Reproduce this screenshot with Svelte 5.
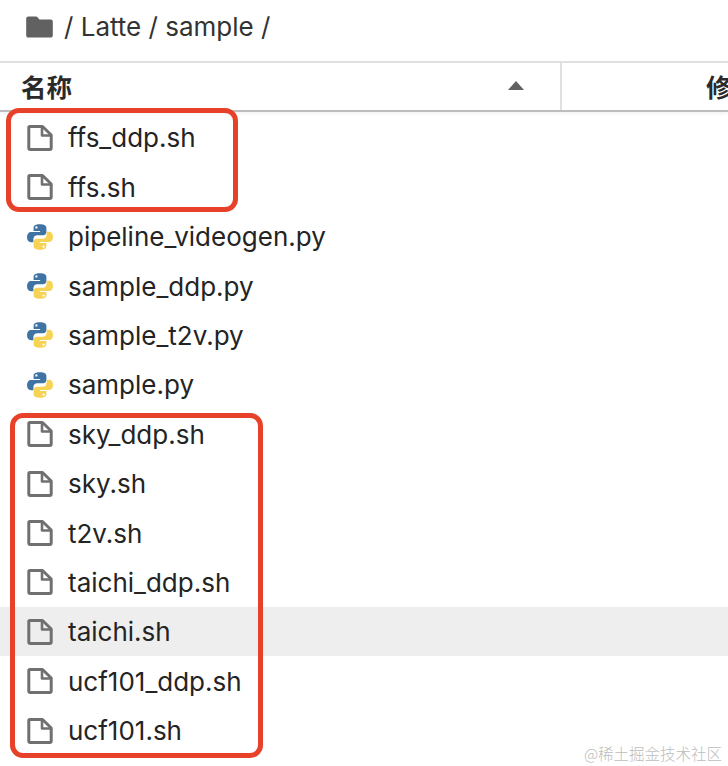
<script>
  const files = [
    { name: 'ffs_ddp.sh', type: 'file' },
    { name: 'ffs.sh', type: 'file' },
    { name: 'pipeline_videogen.py', type: 'py' },
    { name: 'sample_ddp.py', type: 'py' },
    { name: 'sample_t2v.py', type: 'py' },
    { name: 'sample.py', type: 'py' },
    { name: 'sky_ddp.sh', type: 'file' },
    { name: 'sky.sh', type: 'file' },
    { name: 't2v.sh', type: 'file' },
    { name: 'taichi_ddp.sh', type: 'file' },
    { name: 'taichi.sh', type: 'file', active: true },
    { name: 'ucf101_ddp.sh', type: 'file' },
    { name: 'ucf101.sh', type: 'file' }
  ];
</script>

<div class="page">
  <div class="crumbs">
    <svg class="folder" viewBox="0 0 27 22" width="27" height="22" aria-hidden="true">
      <path d="M2.5 0.5H9.5C10.6 0.5 11.3 1 12 1.8L13.4 3.5H24.5C25.9 3.5 26.8 4.4 26.8 5.8V19.2C26.8 20.6 25.9 21.5 24.5 21.5H2.5C1.1 21.5 0.2 20.6 0.2 19.2V2.8C0.2 1.4 1.1 0.5 2.5 0.5Z" fill="#616161"/>
    </svg>
    <span>/ Latte / sample /</span>
  </div>

  <div class="header">
    <div class="col name">
      <span>名称</span>
      <svg class="sort" viewBox="0 0 16 9" width="16" height="9" aria-hidden="true"><path d="M8 0L16 9H0Z" fill="#616161"/></svg>
    </div>
    <div class="col modified"><span>修</span></div>
  </div>

  <ul class="list">
    {#each files as f}
      <li class="row" class:active={f.active}>
        {#if f.type === 'file'}
          <svg class="icon" viewBox="0 0 26 26" width="26" height="26" aria-hidden="true">
            <path d="M2.8 1.5H15.5L24.2 10V23C24.2 24 23.7 24.5 22.7 24.5H3.3C2.3 24.5 1.8 24 1.8 23V2.5C1.8 1.9 2.2 1.5 2.8 1.5Z" fill="none" stroke="#707070" stroke-width="3" stroke-linejoin="round"/>
            <path d="M15 1.5V10.5H24" fill="none" stroke="#707070" stroke-width="2.6" stroke-linejoin="round"/>
          </svg>
        {:else}
          <svg class="icon" viewBox="0 0 26 26" width="26" height="26" aria-hidden="true">
            <path d="M12.8 0.2C6.8 0.2 6.6 2.6 6.6 4.2V6.9H13.1V8H4C1.6 8 0 10 0 13.1C0 16.3 1.5 18.3 3.8 18.3H6.4V15C6.4 12.8 8.2 11.2 10.2 11.2H16.2C18 11.2 19.4 9.8 19.4 8V3.8C19.4 1.8 17.4 0.2 12.8 0.2ZM9.4 2.2A1.2 1.2 0 1 1 9.4 4.6A1.2 1.2 0 0 1 9.4 2.2Z" fill="#3f73a3"/>
            <path d="M13.2 25.8C19.2 25.8 19.4 23.4 19.4 21.8V19.1H12.9V18H22C24.4 18 26 16 26 12.9C26 9.7 24.5 7.7 22.2 7.7H19.6V11C19.6 13.2 17.8 14.8 15.8 14.8H9.8C8 14.8 6.6 16.2 6.6 18V22.2C6.6 24.2 8.6 25.8 13.2 25.8ZM16.6 23.8A1.2 1.2 0 1 1 16.6 21.4A1.2 1.2 0 0 1 16.6 23.8Z" fill="#f7d355"/>
          </svg>
        {/if}
        <span class="label">{f.name}</span>
      </li>
    {/each}
  </ul>

  <div class="mark one"></div>
  <div class="mark two"></div>
  <div class="watermark">@稀土掘金技术社区</div>
</div>

<style>
  :global(body) {
    margin: 0;
    background: #fff;
  }
  .page {
    position: relative;
    width: 728px;
    height: 766px;
    overflow: hidden;
    background: #fff;
    color: #212121;
    font-family: Inter, "Noto Sans CJK SC", sans-serif;
  }
  .crumbs {
    box-sizing: border-box;
    display: flex;
    align-items: center;
    gap: 11px;
    padding: 0 0 8px 26px;
    font-size: 26px;
    color: #333;
    border-bottom: 2px solid #e0e0e0;
    height: 63px;
  }
  .folder {
    flex: none;
  }
  .header {
    display: flex;
    height: 49px;
    box-sizing: border-box;
    border-bottom: 2px solid #bdbdbd;
    font-family: "Noto Sans CJK SC", sans-serif;
    font-weight: 700;
    font-size: 25.5px;
    color: #2a2a2a;
    box-shadow: 0 2px 3px rgba(0, 0, 0, 0.05);
  }
  .col {
    display: flex;
    align-items: center;
    padding-bottom: 3px;
  }
  .name {
    width: 562px;
    flex: none;
    box-sizing: border-box;
    justify-content: space-between;
    padding: 0 36px 3px 21px;
    border-right: 2px solid #e0e0e0;
  }
  .sort {
    margin-top: 1px;
  }
  .modified {
    flex: 1;
    padding-left: 144px;
    white-space: nowrap;
    overflow: hidden;
  }
  .list {
    list-style: none;
    margin: 1.2px 0 0;
    padding: 0;
  }
  .row {
    display: flex;
    align-items: center;
    height: 49.4px;
    padding-left: 27px;
    gap: 15px;
    font-size: 26px;
    color: #242424;
  }
  .row.active {
    background: #eeeeee;
  }
  .icon {
    flex: none;
  }
  .label {
    white-space: nowrap;
  }
  .mark {
    position: absolute;
    box-sizing: border-box;
    border: 5px solid #e8412a;
    border-radius: 13px;
  }
  .mark.one {
    left: 6px;
    top: 108px;
    width: 232px;
    height: 104px;
  }
  .mark.two {
    left: 10px;
    top: 413px;
    width: 253px;
    height: 345px;
  }
  .watermark {
    position: absolute;
    right: 6px;
    top: 743px;
    font-size: 15.5px;
    line-height: 20px;
    color: #bdbdbd;
    font-family: "Noto Sans CJK SC", sans-serif;
    font-weight: 300;
  }
</style>
